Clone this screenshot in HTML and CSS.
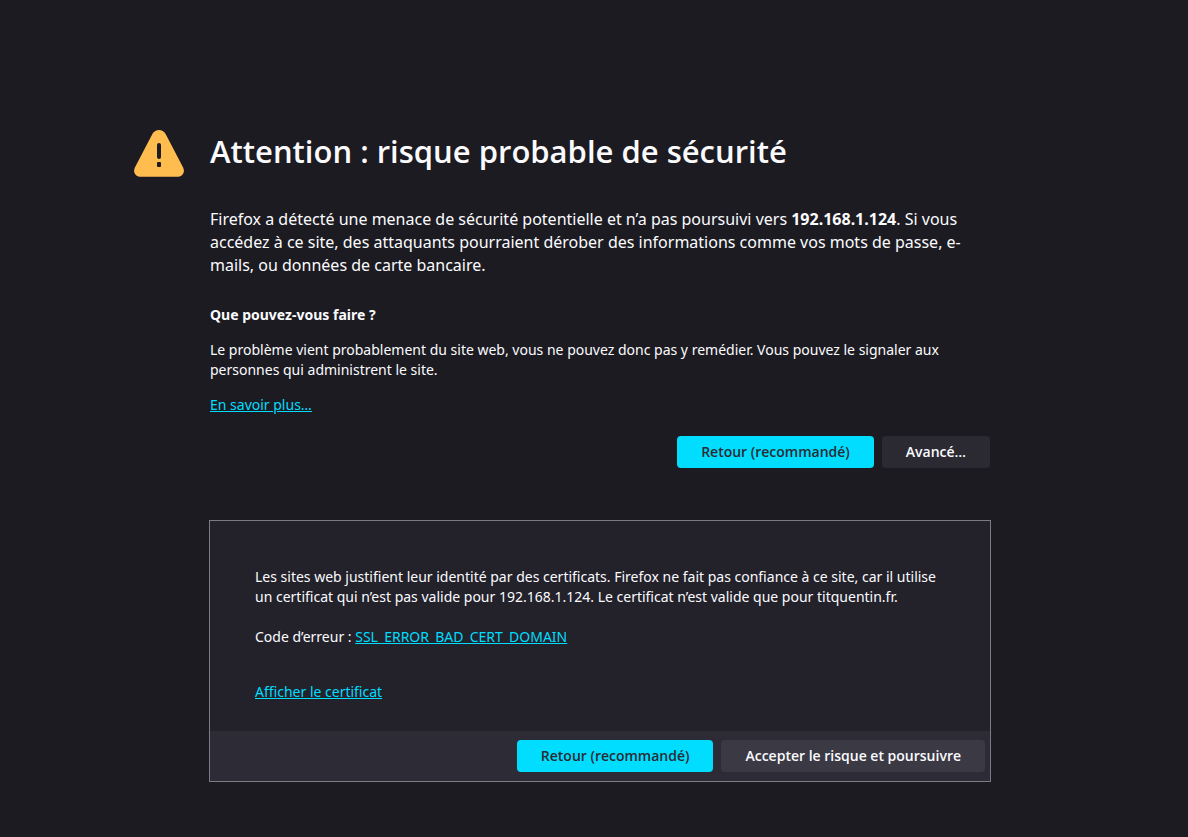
FILE: index.html
```
<!DOCTYPE html>
<html lang="fr">
<head>
    <meta charset="UTF-8">
    <meta name="viewport" content="width=device-width, initial-scale=1.0">
    <title>Attention : risque probable de sécurité</title>
    <link rel="stylesheet" href="styles.css">
</head>
<body>
    <main class="container">
        <header class="title">
            <svg class="title-icon" viewBox="0 0 50 48" aria-hidden="true">
                <path fill="#ffbd4f" d="M18.500 3.800C20 1.300 22.300 0 25 0s5 1.300 6.500 3.800l17.600 33.700c2.300 4.600-.500 9.300-5.600 9.300h-37C1.400 46.800-1.400 42.100.9 37.500z"/>
                <rect x="23" y="13" width="4" height="16" rx="2" fill="#1c1b22"/>
                <rect x="23" y="32" width="4" height="5" rx="1" fill="#1c1b22"/>
            </svg>
            <h1>Attention : risque probable de sécurité</h1>
        </header>

        <p class="intro">Firefox a détecté une menace de sécurité potentielle et n’a pas poursuivi vers <b>192.168.1.124</b>. Si vous accédez à ce site, des attaquants pourraient dérober des informations comme vos mots de passe, e-mails, ou données de carte bancaire.</p>

        <h2>Que pouvez-vous faire ?</h2>
        <p>Le problème vient probablement du site web, vous ne pouvez donc pas y remédier. Vous pouvez le signaler aux personnes qui administrent le site.</p>
        <p><a href="#more">En savoir plus…</a></p>

        <div class="buttons">
            <button type="button" class="primary">Retour (recommandé)</button>
            <button type="button">Avancé…</button>
        </div>

        <section class="advanced">
            <div class="advanced-body">
                <p>Les sites web justifient leur identité par des certificats. Firefox ne fait pas confiance à ce site, car il utilise un certificat qui n’est pas valide pour 192.168.1.124. Le certificat n’est valide que pour titquentin.fr.</p>
                <p class="error-code">Code d’erreur : <a href="#code">SSL_ERROR_BAD_CERT_DOMAIN</a></p>
                <p class="certificate"><a href="#certificate">Afficher le certificat</a></p>
            </div>
            <div class="buttons advanced-buttons">
                <button type="button" class="primary">Retour (recommandé)</button>
                <button type="button">Accepter le risque et poursuivre</button>
            </div>
        </section>
    </main>
</body>
</html>
```
FILE: styles.css
```
* {
    margin: 0;
    padding: 0;
    box-sizing: border-box;
}

body {
    background-color: #1c1b22;
    color: #fbfbfe;
    font-family: "Segoe UI", "Noto Sans", sans-serif;
    font-size: 14px;
    line-height: 20px;
    padding: 128px 88px 55px 100px;
}

.container {
    max-width: 780px;
    margin: 0 auto;
}

.title {
    display: flex;
    align-items: flex-start;
    margin-bottom: 30px;
}

/* the icon hangs in the left margin, beside the text column */
.title-icon {
    flex: none;
    width: 50px;
    height: 48px;
    margin: 2px 26px 0 -76px;
}

h1,
button {
    font-family: "Segoe UI", "Open Sans", sans-serif;
    font-weight: 600;
}

h1 {
    font-size: 31px;
    line-height: 46px;
}

.intro {
    font-size: 16px;
    line-height: 23px;
    margin-bottom: 28px;
}

h2 {
    font-size: 14px;
    line-height: 20px;
    margin-bottom: 15px;
}

p {
    margin-bottom: 15px;
}

a {
    color: #00ddff;
}

.buttons {
    display: flex;
    justify-content: flex-end;
    gap: 8px;
    margin-top: 21px;
}

button {
    height: 32px;
    padding: 0 24px;
    border: none;
    border-radius: 4px;
    background-color: #2b2a33;
    color: #fbfbfe;
    font-size: 14px;
    line-height: 20px;
    cursor: pointer;
}

button:hover {
    background-color: #52525e;
}

.primary {
    background-color: #00ddff;
    color: #2b2a33;
}

.primary:hover {
    background-color: #80ebff;
}

.advanced {
    margin: 52px -1px 0;
    border: 1px solid #7b7a86;
    background-color: #23222b;
}

.advanced-body {
    padding: 46px 45px 29px;
}

.advanced-body p {
    margin-bottom: 20px;
}

.advanced-body .error-code {
    margin-bottom: 35px;
}

.advanced-body .certificate {
    margin-bottom: 0;
}

.advanced-buttons {
    margin-top: 0;
    padding: 9px 5px;
    background-color: #2d2b36;
}

.advanced-buttons button:not(.primary) {
    background-color: #3a3944;
}
```
